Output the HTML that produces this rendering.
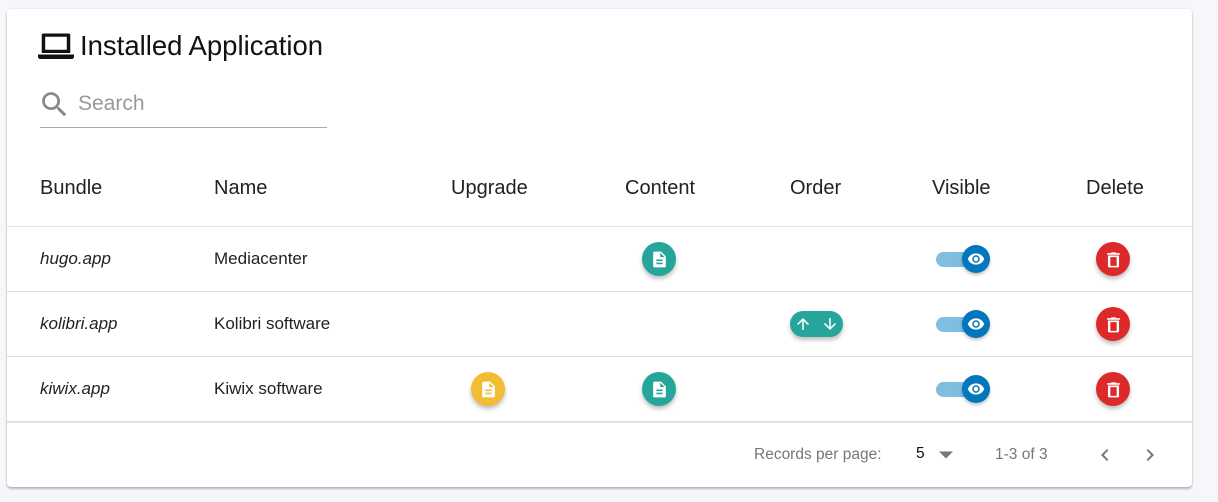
<!DOCTYPE html>
<html><head><style>
body{margin:0;background:#f7f7fb;font-family:"Liberation Sans",Roboto,sans-serif;width:1218px;height:502px;overflow:hidden;position:relative}
.card{position:absolute;left:7px;top:9px;width:1185px;height:478px;background:#fff;border-radius:4px;box-shadow:0 2px 2px rgba(0,0,0,.25),0 0 2px rgba(0,0,0,.1)}
.a{position:absolute}
.hd{font-size:20px;color:#222;top:168px}
.row{position:absolute;left:0;width:1185px;height:1px;background:#e0e0e0}
.cell{position:absolute;font-size:17px;color:#222}
.btn{position:absolute;width:34px;height:34px;border-radius:50%;box-shadow:0 3px 4px rgba(0,0,0,.25);display:flex;align-items:center;justify-content:center}
.g{background:#26a69a}.y{background:#f2bd33}.r{background:#dc2a2a}
.trk{position:absolute;width:42px;height:15px;border-radius:8px;background:#80bddf}
.knob{position:absolute;width:28px;height:28px;border-radius:50%;background:#0277bd;box-shadow:0 2px 3px rgba(0,0,0,.25);display:flex;align-items:center;justify-content:center}
</style></head><body>
<div class="card">
<svg class="a" style="left:31px;top:23px" width="36" height="30" viewBox="0 0 24 20"><path d="M3.5 1h17a1 1 0 0 1 1 1v12h-19V2a1 1 0 0 1 1-1zm1.3 2.2v8.6h14.4V3.2z M0 15h24v1.5a1.5 1.5 0 0 1-1.5 1.5h-21A1.5 1.5 0 0 1 0 16.5z" fill="#111"/></svg>
<div class="a" style="left:73px;top:21px;font-size:27.5px;color:#111">Installed Application</div>
<svg class="a" style="left:31px;top:79px" width="33" height="33" viewBox="0 0 24 24"><path d="M15.5 14h-.79l-.28-.27A6.5 6.5 0 1 0 9.5 16a6.47 6.47 0 0 0 4.23-1.57l.27.28v.79l5 5 1.5-1.5zm-6 0A4.5 4.5 0 1 1 14 9.5 4.5 4.5 0 0 1 9.5 14z" fill="#888"/></svg>
<div class="a" style="left:71px;top:83px;font-size:21px;color:#999">Search</div>
<div class="a" style="left:33px;top:118px;width:287px;height:1px;background:#aaa"></div>
<div class="a hd" style="left:33px">Bundle</div>
<div class="a hd" style="left:207px">Name</div>
<div class="a hd" style="left:444px">Upgrade</div>
<div class="a hd" style="left:618px">Content</div>
<div class="a hd" style="left:783px">Order</div>
<div class="a hd" style="left:925px">Visible</div>
<div class="a hd" style="left:1079px">Delete</div>
<div class="row" style="top:217px"></div>
<div class="row" style="top:282px"></div>
<div class="row" style="top:347px"></div>
<div class="row" style="top:412px;height:2px"></div>
<div class="cell" style="left:33px;top:240px;font-style:italic">hugo.app</div>
<div class="cell" style="left:207px;top:240px">Mediacenter</div>
<div class="cell" style="left:33px;top:305px;font-style:italic">kolibri.app</div>
<div class="cell" style="left:207px;top:305px">Kolibri software</div>
<div class="cell" style="left:33px;top:370px;font-style:italic">kiwix.app</div>
<div class="cell" style="left:207px;top:370px">Kiwix software</div>

<div class="btn g" style="left:635px;top:233px"><svg width="19" height="19" viewBox="0 0 24 24"><path d="M14 2H6a2 2 0 0 0-2 2v16a2 2 0 0 0 2 2h12a2 2 0 0 0 2-2V8zm2 16H8v-2h8zm0-4H8v-2h8zm-3-5V3.5L18.5 9z" fill="#fff"/></svg></div>
<div class="btn g" style="left:635px;top:363px"><svg width="19" height="19" viewBox="0 0 24 24"><path d="M14 2H6a2 2 0 0 0-2 2v16a2 2 0 0 0 2 2h12a2 2 0 0 0 2-2V8zm2 16H8v-2h8zm0-4H8v-2h8zm-3-5V3.5L18.5 9z" fill="#fff"/></svg></div>
<div class="btn y" style="left:464px;top:363px"><svg width="19" height="19" viewBox="0 0 24 24"><path d="M14 2H6a2 2 0 0 0-2 2v16a2 2 0 0 0 2 2h12a2 2 0 0 0 2-2V8zm2 16H8v-2h8zm0-4H8v-2h8zm-3-5V3.5L18.5 9z" fill="#fff"/></svg></div>
<div class="a g" style="left:783px;top:302px;width:53px;height:26px;border-radius:13px;box-shadow:0 3px 4px rgba(0,0,0,.25)">
<svg class="a" style="left:4px;top:4px" width="18" height="18" viewBox="0 0 24 24"><path d="M4 12l1.41 1.41L11 7.83V20h2V7.83l5.58 5.59L20 12l-8-8z" fill="#fff"/></svg>
<svg class="a" style="left:31px;top:4px" width="18" height="18" viewBox="0 0 24 24"><path d="M20 12l-1.41-1.41L13 16.17V4h-2v12.17l-5.58-5.59L4 12l8 8z" fill="#fff"/></svg></div>

<div class="trk" style="left:929px;top:243px"></div><div class="knob" style="left:955px;top:236px"><svg width="18" height="18" viewBox="0 0 24 24"><path d="M12 4.5C7 4.5 2.73 7.61 1 12c1.73 4.39 6 7.5 11 7.5s9.270-3.11 11-7.5c-1.73-4.39-6-7.5-11-7.5zM12 17a5 5 0 1 1 0-10 5 5 0 0 1 0 10zm0-8a3 3 0 1 0 0 6 3 3 0 0 0 0-6z" fill="#fff"/></svg></div>
<div class="trk" style="left:929px;top:308px"></div><div class="knob" style="left:955px;top:301px"><svg width="18" height="18" viewBox="0 0 24 24"><path d="M12 4.5C7 4.5 2.73 7.61 1 12c1.73 4.39 6 7.5 11 7.5s9.27-3.11 11-7.5c-1.73-4.39-6-7.5-11-7.5zM12 17a5 5 0 1 1 0-10 5 5 0 0 1 0 10zm0-8a3 3 0 1 0 0 6 3 3 0 0 0 0-6z" fill="#fff"/></svg></div>
<div class="trk" style="left:929px;top:373px"></div><div class="knob" style="left:955px;top:366px"><svg width="18" height="18" viewBox="0 0 24 24"><path d="M12 4.5C7 4.5 2.73 7.61 1 12c1.73 4.39 6 7.5 11 7.5s9.27-3.11 11-7.5c-1.73-4.39-6-7.5-11-7.5zM12 17a5 5 0 1 1 0-10 5 5 0 0 1 0 10zm0-8a3 3 0 1 0 0 6 3 3 0 0 0 0-6z" fill="#fff"/></svg></div>

<div class="btn r" style="left:1089px;top:233px"><svg width="19" height="19" viewBox="0 0 24 24"><path d="M9 3v1H4v2h16V4h-5V3zM5 7v13a2 2 0 0 0 2 2h10a2 2 0 0 0 2-2V7zm3 2h8v11H8z" fill="#fff"/></svg></div>
<div class="btn r" style="left:1089px;top:298px"><svg width="19" height="19" viewBox="0 0 24 24"><path d="M9 3v1H4v2h16V4h-5V3zM5 7v13a2 2 0 0 0 2 2h10a2 2 0 0 0 2-2V7zm3 2h8v11H8z" fill="#fff"/></svg></div>
<div class="btn r" style="left:1089px;top:363px"><svg width="19" height="19" viewBox="0 0 24 24"><path d="M9 3v1H4v2h16V4h-5V3zM5 7v13a2 2 0 0 0 2 2h10a2 2 0 0 0 2-2V7zm3 2h8v11H8z" fill="#fff"/></svg></div>

<div class="a" style="left:747px;top:437px;font-size:15.5px;color:#777">Records per page:</div>
<div class="a" style="left:909px;top:436px;font-size:15.5px;color:#111">5</div>
<svg class="a" style="left:932px;top:442px" width="14" height="8" viewBox="0 0 10 5"><path d="M0 0l5 5 5-5z" fill="#777"/></svg>
<div class="a" style="left:988px;top:437px;font-size:15.5px;color:#777">1-3 of 3</div>
<svg class="a" style="left:1086px;top:434px" width="24" height="24" viewBox="0 0 24 24"><path d="M15.4 7.4L14 6l-6 6 6 6 1.4-1.4L10.8 12z" fill="#777"/></svg>
<svg class="a" style="left:1131px;top:434px" width="24" height="24" viewBox="0 0 24 24"><path d="M10 6L8.6 7.4 13.2 12l-4.6 4.6L10 18l6-6z" fill="#777"/></svg>
</div>
</body></html>
